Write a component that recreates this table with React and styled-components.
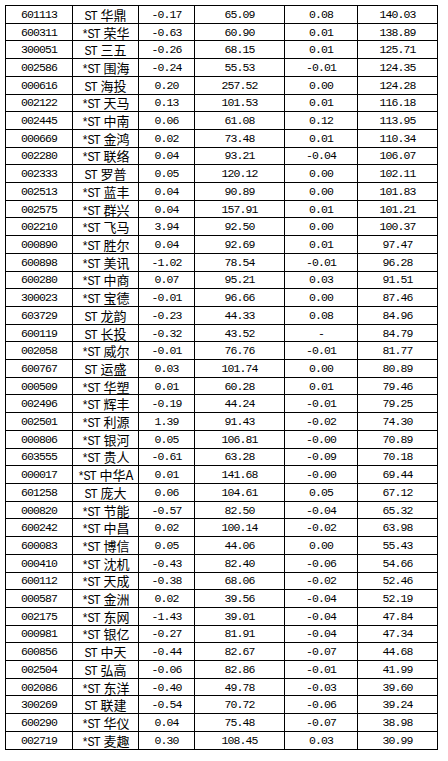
import React from 'react';
import styled, { createGlobalStyle } from 'styled-components';

const GlobalStyle = createGlobalStyle`
  html, body {
    margin: 0;
    padding: 0;
    background: #ffffff;
  }
  body {
    padding: 5px 0 0 5px;
  }
`;

const Sheet = styled.table`
  border-collapse: collapse;
  table-layout: fixed;
  width: 432px;
  color: #000000;
  font-family: "Liberation Mono", "Noto Sans CJK SC", monospace;
  font-size: 11.5px;
  letter-spacing: -0.9px;
`;

const Row = styled.tr`
  height: 17.71px;
`;

const Cell = styled.td`
  border: 1px solid #000000;
  padding: 0;
  text-align: center;
  vertical-align: middle;
  line-height: 15px;
  white-space: nowrap;
`;

const NameWrap = styled.div`
  display: flex;
  justify-content: center;
  align-items: baseline;
  gap: 4px;
  height: 15px;
`;

const Prefix = styled.span`
  line-height: 15px;
  font-size: 12px;
  letter-spacing: -1.2px;
`;

const Name = styled.span`
  line-height: 15px;
  font-family: "Noto Sans CJK SC", sans-serif;
  font-size: 13px;
  letter-spacing: 0;
`;

// code, prefix, name, then four value columns
const rows = [
  ['601113', 'ST', '华鼎', '-0.17', '65.09', '0.08', '140.03'],
  ['600311', '*ST', '荣华', '-0.63', '60.90', '0.01', '138.89'],
  ['300051', 'ST', '三五', '-0.26', '68.15', '0.01', '125.71'],
  ['002586', '*ST', '围海', '-0.24', '55.53', '-0.01', '124.35'],
  ['000616', 'ST', '海投', '0.20', '257.52', '0.00', '124.28'],
  ['002122', '*ST', '天马', '0.13', '101.53', '0.01', '116.18'],
  ['002445', '*ST', '中南', '0.06', '61.08', '0.12', '113.95'],
  ['000669', '*ST', '金鸿', '0.02', '73.48', '0.01', '110.34'],
  ['002280', '*ST', '联络', '0.04', '93.21', '-0.04', '106.07'],
  ['002333', 'ST', '罗普', '0.05', '120.12', '0.00', '102.11'],
  ['002513', '*ST', '蓝丰', '0.04', '90.89', '0.00', '101.83'],
  ['002575', '*ST', '群兴', '0.04', '157.91', '0.01', '101.21'],
  ['002210', '*ST', '飞马', '3.94', '92.50', '0.00', '100.37'],
  ['000890', '*ST', '胜尔', '0.04', '92.69', '0.01', '97.47'],
  ['600898', '*ST', '美讯', '-1.02', '78.54', '-0.01', '96.28'],
  ['600280', '*ST', '中商', '0.07', '95.21', '0.03', '91.51'],
  ['300023', '*ST', '宝德', '-0.01', '96.66', '0.00', '87.46'],
  ['603729', 'ST', '龙韵', '-0.23', '44.33', '0.08', '84.96'],
  ['600119', 'ST', '长投', '-0.32', '43.52', '-', '84.79'],
  ['002058', '*ST', '威尔', '-0.01', '76.76', '-0.01', '81.77'],
  ['600767', 'ST', '运盛', '0.03', '101.74', '0.00', '80.89'],
  ['000509', '*ST', '华塑', '0.01', '60.28', '0.01', '79.46'],
  ['002496', '*ST', '辉丰', '-0.19', '44.24', '-0.01', '79.25'],
  ['002501', '*ST', '利源', '1.39', '91.43', '-0.02', '74.30'],
  ['000806', '*ST', '银河', '0.05', '106.81', '-0.00', '70.89'],
  ['603555', '*ST', '贵人', '-0.61', '63.28', '-0.09', '70.18'],
  ['000017', '*ST', '中华A', '0.01', '141.68', '-0.00', '69.44'],
  ['601258', 'ST', '庞大', '0.06', '104.61', '0.05', '67.12'],
  ['000820', '*ST', '节能', '-0.57', '82.50', '-0.04', '65.32'],
  ['600242', '*ST', '中昌', '0.02', '100.14', '-0.02', '63.98'],
  ['600083', '*ST', '博信', '0.05', '44.06', '0.00', '55.43'],
  ['000410', '*ST', '沈机', '-0.43', '82.40', '-0.06', '54.66'],
  ['600112', '*ST', '天成', '-0.38', '68.06', '-0.02', '52.46'],
  ['000587', '*ST', '金洲', '0.02', '39.56', '-0.04', '52.19'],
  ['002175', '*ST', '东网', '-1.43', '39.01', '-0.04', '47.84'],
  ['000981', '*ST', '银亿', '-0.27', '81.91', '-0.04', '47.34'],
  ['600856', 'ST', '中天', '-0.44', '82.67', '-0.07', '44.68'],
  ['002504', 'ST', '弘高', '-0.06', '82.86', '-0.01', '41.99'],
  ['002086', '*ST', '东洋', '-0.40', '49.78', '-0.03', '39.60'],
  ['300269', 'ST', '联建', '-0.54', '70.72', '-0.06', '39.24'],
  ['600290', '*ST', '华仪', '0.04', '75.48', '-0.07', '38.98'],
  ['002719', '*ST', '麦趣', '0.30', '108.45', '0.03', '30.99'],
];

const widths = [67, 66, 56, 90, 73, 80];

const App = () => (
  <>
    <GlobalStyle />
    <Sheet>
      <colgroup>
        {widths.map((w, i) => <col key={i} style={{ width: `${w}px` }} />)}
      </colgroup>
      <tbody>
        {rows.map(([code, prefix, name, a, b, c, d]) => (
          <Row key={code}>
            <Cell>{code}</Cell>
            <Cell>
              <NameWrap>
                <Prefix>{prefix}</Prefix>
                <Name>{name}</Name>
              </NameWrap>
            </Cell>
            <Cell>{a}</Cell>
            <Cell>{b}</Cell>
            <Cell>{c}</Cell>
            <Cell>{d}</Cell>
          </Row>
        ))}
      </tbody>
    </Sheet>
  </>
);

export default App;
